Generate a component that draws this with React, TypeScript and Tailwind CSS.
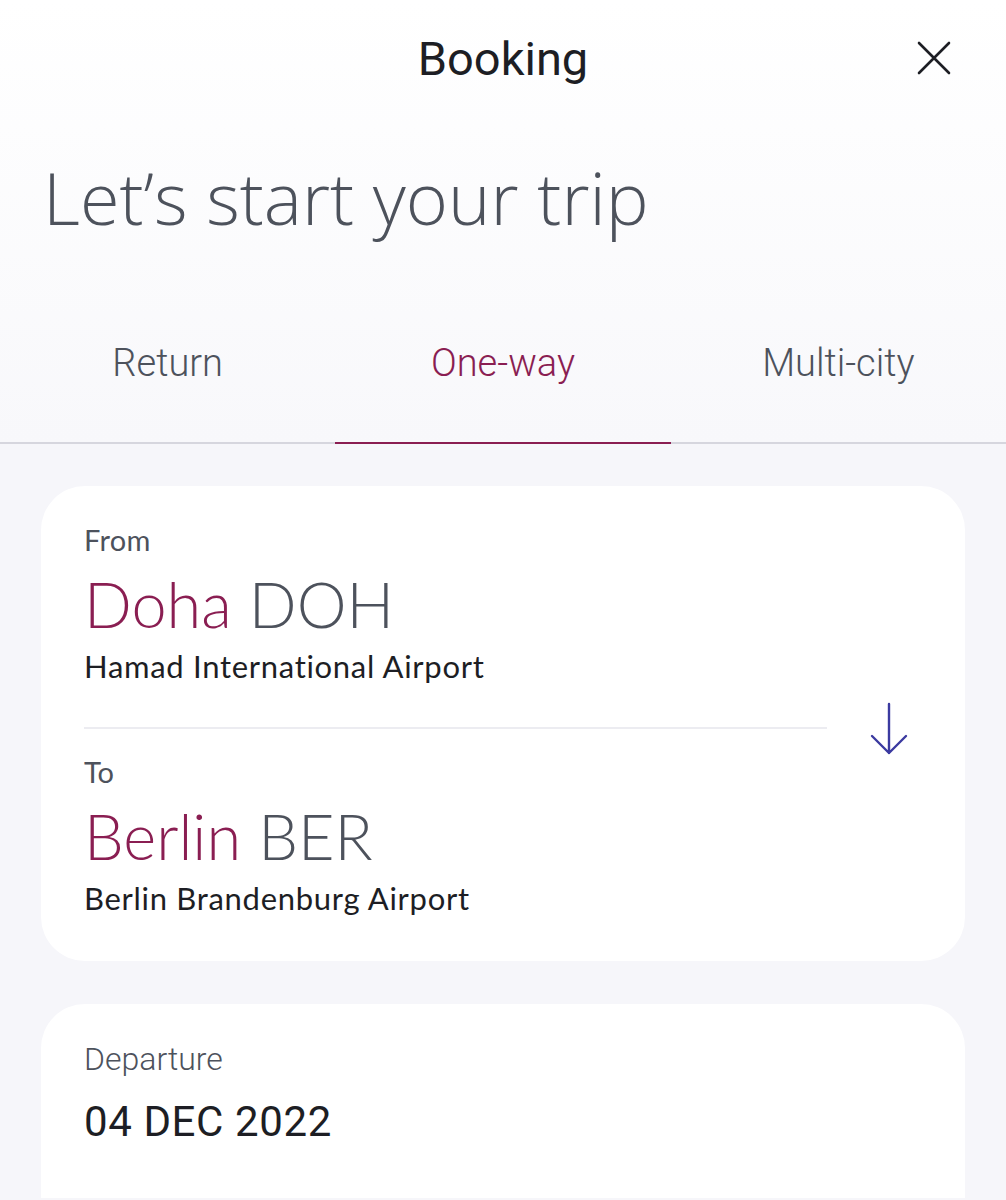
import React from "react";

export default function App() {
  return (
    <div className="w-[1006px] h-[1200px] overflow-hidden bg-[#f6f6fa] relative">
      <div className="bg-gradient-to-b from-white to-[#f8f8fb]">
        <div className="relative h-[118px] flex items-center justify-center">
          <div className="text-[47px] leading-none text-[#1d1e24] font-['Roboto',sans-serif] -mt-[2px]">Booking</div>
          <svg className="absolute left-[916px] top-[40px]" width="36" height="36" viewBox="0 0 36 36" fill="none">
            <path d="M3 3 L33 33 M33 3 L3 33" stroke="#1d1e24" strokeWidth="2.6" strokeLinecap="round" />
          </svg>
        </div>
        <div className="pl-[43px] h-[180px] pt-[43px]">
          <div className="text-[72px] leading-none font-light text-[#4d525c] font-['Open_Sans',sans-serif]">Let’s start your trip</div>
        </div>
        <div className="grid grid-cols-3 h-[146px] border-b-2 border-[#d6d6de] font-['Roboto',sans-serif] font-light">
          <div className="flex items-center justify-center text-[38px] text-[#4d525c] pb-[14px]">Return</div>
          <div className="relative flex items-center justify-center text-[38px] text-[#8a1e52] pb-[14px]">
            One-way
            <div className="absolute left-0 right-0 -bottom-[2px] h-[2px] bg-[#8a1e52]" />
          </div>
          <div className="flex items-center justify-center text-[38px] text-[#4d525c] pb-[14px]">Multi-city</div>
        </div>
      </div>

      <div className="px-[41px] pt-[42px] flex flex-col gap-[43px]">
        <div className="bg-white rounded-[44px] pl-[43px] pr-[56px] pt-[36px] pb-[44px] font-['Lato',sans-serif]">
          <div className="flex items-start">
            <div className="flex-1">
              <div className="text-[29px] leading-[36px] text-[#4d525c] tracking-[0.3px]">From</div>
              <div className="text-[63px] leading-[72px] font-light mt-[10px]">
                <span className="text-[#8a1e52]">Doha</span> <span className="text-[#4d525c]">DOH</span>
              </div>
              <div className="text-[31px] leading-[38px] text-[#1d1e24] mt-[7px] tracking-[0.7px]">Hamad International Airport</div>
              <div className="h-[2px] bg-[#ececf1] mt-[42px] mb-[25px] mr-[42px]" />
              <div className="text-[29px] leading-[36px] text-[#4d525c]">To</div>
              <div className="text-[63px] leading-[72px] font-light mt-[10px]">
                <span className="text-[#8a1e52]">Berlin</span> <span className="text-[#4d525c]">BER</span>
              </div>
              <div className="text-[31px] leading-[38px] text-[#1d1e24] mt-[7px] tracking-[0.7px]">Berlin Brandenburg Airport</div>
            </div>
            <svg className="mt-[180px]" width="40" height="54" viewBox="0 0 40 54" fill="none">
              <path d="M20 2 V51 M3 34 L20 51 L37 34" stroke="#3b3aa0" strokeWidth="2.4" strokeLinecap="round" strokeLinejoin="round" />
            </svg>
          </div>
        </div>

        <div className="bg-white rounded-t-[44px] pl-[43px] pt-[36px] h-[194px] font-['Roboto',sans-serif]">
          <div className="text-[32px] leading-[38px] text-[#4d525c] font-light">Departure</div>
          <div className="text-[42px] leading-[48px] text-[#1d1e24] mt-[20px] tracking-[0.6px]">04 DEC 2022</div>
        </div>
      </div>
    </div>
  );
}
